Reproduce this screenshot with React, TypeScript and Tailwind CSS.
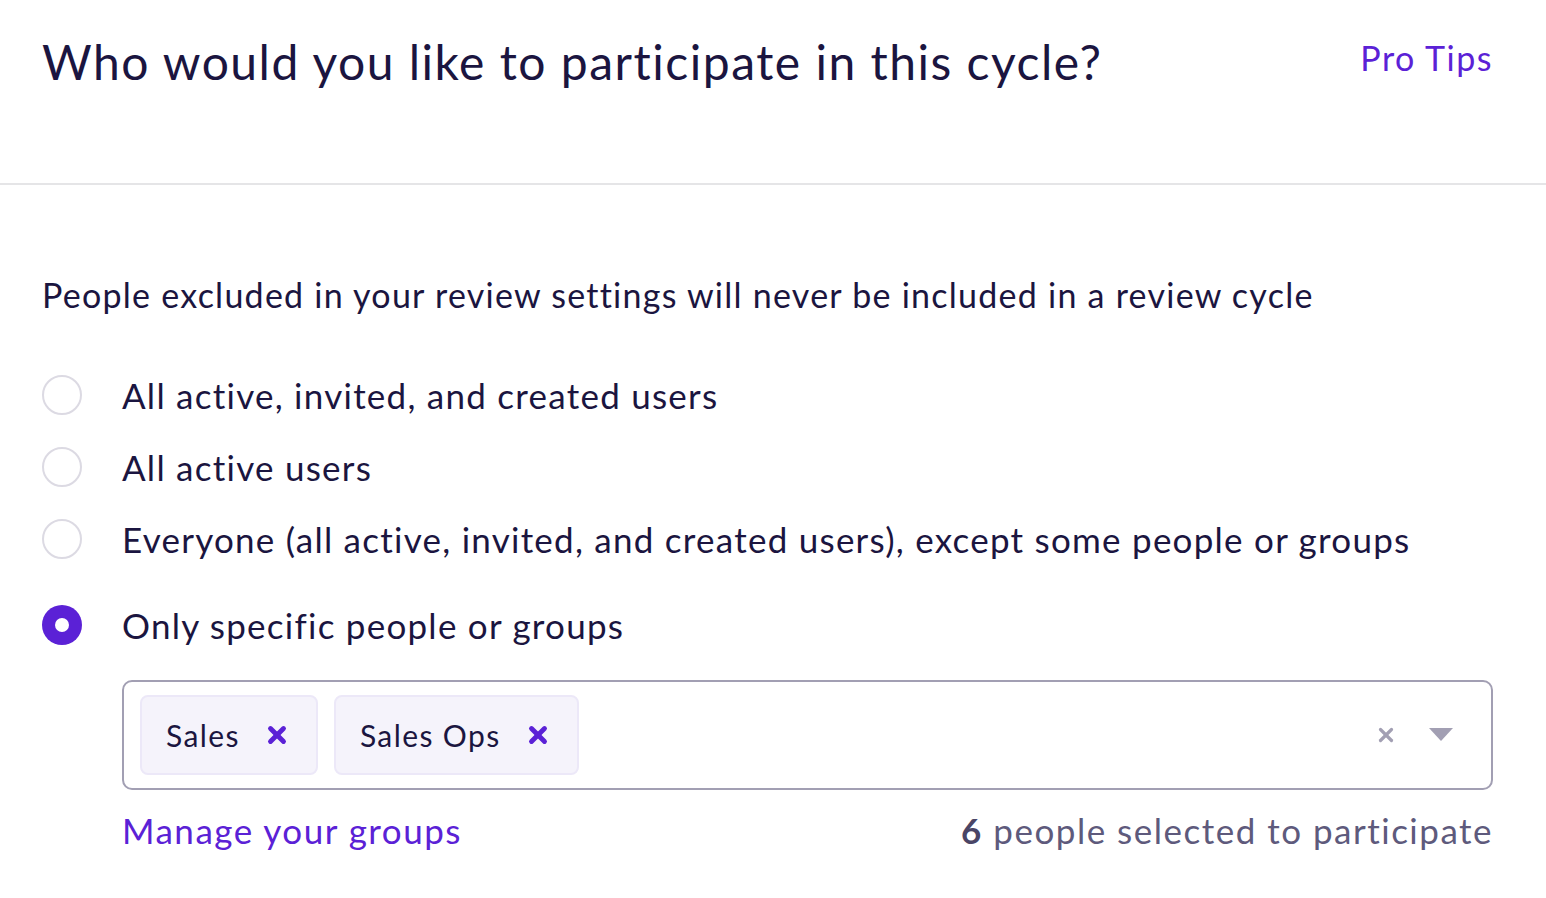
import { X } from 'lucide-react';

const options = [
  { id: 'all', label: 'All active, invited, and created users' },
  { id: 'active', label: 'All active users' },
  { id: 'except', label: 'Everyone (all active, invited, and created users), except some people or groups' },
];

function Radio({ checked }: { checked?: boolean }) {
  if (checked) {
    return (
      <span className="flex h-10 w-10 shrink-0 items-center justify-center rounded-full bg-[#5b21d6]">
        <span className="h-[14px] w-[14px] rounded-full bg-white" />
      </span>
    );
  }
  return <span className="h-10 w-10 shrink-0 rounded-full border-2 border-[#dcdae3] bg-white" />;
}

function Chip({ label }: { label: string }) {
  return (
    <div className="flex h-[80px] items-center gap-[24px] rounded-lg border-2 border-[#ece8f8] bg-[#f5f3fb] pl-[24px] pr-[26px]">
      <span className="text-[30px] tracking-[1.4px] text-[#1b1540]">{label}</span>
      <X className="h-[26px] w-[26px] text-[#5b21d6]" strokeWidth={4.5} />
    </div>
  );
}

export default function App() {
  return (
    <div className="min-h-screen bg-white font-['Lato',sans-serif] text-[#1b1540]">
      {/* Header */}
      <div className="flex items-start justify-between border-b-2 border-[#e5e5e7] pb-[89px] pl-[42px] pr-[53px] pt-[30px]">
        <h1 className="text-[48px] leading-[64px] tracking-[1.5px]">
          Who would you like to participate in this cycle?
        </h1>
        <a href="#" className="pt-[4px] text-[34px] leading-[48px] tracking-[1.5px] text-[#5b21d6]">
          Pro Tips
        </a>
      </div>

      <div className="pl-[42px] pr-[53px] pt-[90px]">
        <p className="text-[34px] leading-[40px] tracking-[1.25px]">
          People excluded in your review settings will never be included in a review cycle
        </p>

        <div className="mt-[60px] flex flex-col gap-[32px] tracking-[1.25px]">
          {options.map((o) => (
            <label key={o.id} className="flex items-center gap-[40px]">
              <Radio />
              <span className="text-[35px] leading-[40px]">{o.label}</span>
            </label>
          ))}
          <label className="mt-[14px] flex items-center gap-[40px]">
            <Radio checked />
            <span className="text-[35px] leading-[40px]">Only specific people or groups</span>
          </label>
        </div>

        <div className="ml-[80px] mt-[35px]">
          <div className="flex h-[110px] items-center rounded-[10px] border-2 border-[#a29fb3] px-[16px]">
            <div className="flex flex-1 gap-4">
              <Chip label="Sales" />
              <Chip label="Sales Ops" />
            </div>
            <div className="flex items-center gap-[32px] pr-[22px]">
              <X className="h-[22px] w-[22px] text-[#a29fb3]" strokeWidth={3.5} />
              <svg width="24" height="14" viewBox="0 0 24 14">
                <path d="M0 0h24L12 13z" fill="#a29fb3" />
              </svg>
            </div>
          </div>
          <div className="mt-[20px] flex items-center justify-between tracking-[1.5px]">
            <a href="#" className="text-[35px] leading-[40px] text-[#5b21d6]">
              Manage your groups
            </a>
            <span className="text-[35px] leading-[40px] text-[#5e5a7c]">
              <span className="font-bold text-[#4a4566]">6</span> people selected to participate
            </span>
          </div>
        </div>
      </div>
    </div>
  );
}
